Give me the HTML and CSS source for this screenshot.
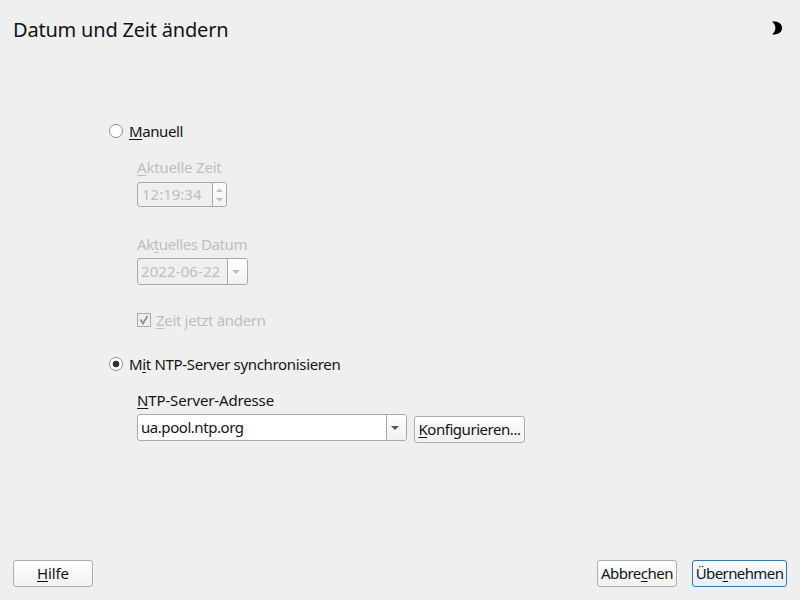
FILE: index.html
```
<!DOCTYPE html>
<html lang="de">
<head>
<meta charset="utf-8">
<title>Datum und Zeit ändern</title>
<link rel="stylesheet" href="styles.css">
</head>
<body>
<header class="titlebar">
  <h1>Datum und Zeit ändern</h1>
  <svg class="moon" width="12" height="14" viewBox="0 0 12 14"><path d="M1 .8C6-.2 11 2 11 7S6 14.200 1 13.200C5.500 10.500 5.500 3.500 1 .8Z"/></svg>
</header>
<main class="content">
  <label class="choice"><span class="radio"></span><span class="t-manual"><u>M</u>anuell</span></label>
  <section class="manual">
    <div class="label t-time"><u>A</u>ktuelle Zeit</div>
    <div class="field time">
      <span class="value">12:19:34</span>
      <span class="drop"><svg width="13" height="23" viewBox="0 0 13 23"><path d="M3 9 6.500 5.500 10 9ZM3 15H10L6.500 18.500Z"/></svg></span>
    </div>
    <div class="label date-label t-date">Ak<u>t</u>uelles Datum</div>
    <div class="field date">
      <span class="value">2022-06-22</span>
      <span class="drop"><svg width="19" height="25" viewBox="0 0 19 25"><path d="M4 11H12L8 15Z"/></svg></span>
    </div>
    <div class="check-row">
      <svg width="14" height="14" viewBox="0 0 14 14"><rect class="box" x=".5" y=".5" width="13" height="13"/><path class="tick" d="M3.500 6.500 6 10.500 10.500 3"/></svg>
      <span class="t-now"><u>Z</u>eit jetzt ändern</span>
    </div>
  </section>
  <label class="choice"><span class="radio on"></span><span class="t-sync">M<u>i</u>t NTP-Server synchronisieren</span></label>
  <section class="ntp">
    <div class="label t-address"><u>N</u>TP-Server-Adresse</div>
    <div class="ntp-row">
      <div class="field server">
        <span class="value">ua.pool.ntp.org</span>
        <span class="drop"><svg width="19" height="25" viewBox="0 0 19 25"><path d="M4 11H12L8 15Z"/></svg></span>
      </div>
      <button class="configure"><u>K</u>onfigurieren...</button>
    </div>
  </section>
</main>
<footer class="actions">
  <button class="help"><u>H</u>ilfe</button>
  <button class="cancel">Abbre<u>c</u>hen</button>
  <button class="apply">Übe<u>r</u>nehmen</button>
</footer>
</body>
</html>
```
FILE: styles.css
```
* { box-sizing: border-box; }
body {
  margin: 0;
  width: 800px;
  height: 600px;
  overflow: hidden;
  display: flex;
  flex-direction: column;
  background: #efefef;
  color: #141414;
  font: 15px/20px "Noto Sans", sans-serif;
  white-space: nowrap;
}
svg { display: block; flex: none; }
u { text-decoration: underline 1px; text-underline-offset: 2px; text-decoration-skip-ink: none; }
.titlebar { display: flex; justify-content: space-between; height: 60px; padding: 15px 17px 0 13px; }
h1 { margin: 0; font-size: 20px; line-height: 30px; font-weight: 400; letter-spacing: -.2px; }
.moon { margin-top: 6px; fill: #000; }
.content { flex: 1; padding: 61px 0 0 109px; }
.choice { display: flex; align-items: center; gap: 6px; height: 20px; }
.radio { width: 14px; height: 14px; border: 1px solid #929292; border-radius: 50%; background: #fff; }
.radio.on { background: radial-gradient(circle, #333 0 3px, #fff 3.700px); }
.manual, .ntp { padding-left: 28px; }
.manual { height: 213px; padding-top: 16px; color: #bebebe; }
.label { height: 20px; }
.date-label { margin-top: 27px; }
.t-manual { letter-spacing: -.4px; }
.t-time { letter-spacing: -.2px; }
.t-date { letter-spacing: -.4px; }
.t-now { letter-spacing: -.33px; }
.t-sync { letter-spacing: -.33px; }
.t-address { letter-spacing: -.15px; }
.field { display: flex; border: 1px solid #a9a9a9; border-radius: 3px; overflow: hidden; background: #efefef; }
.value { flex: 1; padding-left: 3px; line-height: 24px; }
.drop { border-left: 1px solid #a9a9a9; background: linear-gradient(#fff, #f1f1f1); fill: #bebebe; }
.time { width: 90px; height: 25px; margin-top: 5px; }
.time .value { padding-left: 4px; line-height: 23px; }
.date { width: 111px; height: 27px; margin-top: 4px; }
.date .value { letter-spacing: .1px; }
.check-row { display: flex; align-items: center; gap: 5px; height: 20px; margin-top: 25px; }
.box { fill: #efefef; stroke: #a9a9a9; }
.tick { fill: none; stroke: #909090; stroke-width: 1.800; }
.ntp { padding-top: 16px; }
.ntp-row { display: flex; align-items: flex-start; gap: 7px; padding-top: 4px; }
.server { width: 270px; height: 27px; background: #fff; }
.server .value { letter-spacing: -.45px; }
.server .drop { fill: #555; }
button {
  height: 27px;
  padding: 0 0 2px;
  border: 1px solid #adadad;
  border-radius: 3px;
  background: linear-gradient(#fefefe, #f1f1f1);
  color: inherit;
  font: inherit;
  text-align: center;
}
.configure { width: 111px; margin-top: 2px; letter-spacing: -.45px; }
.actions { display: flex; height: 40px; padding: 0 13px; }
.help { width: 80px; margin-right: auto; letter-spacing: -.1px; }
.cancel { width: 80px; margin-right: 15px; letter-spacing: -.5px; }
.apply { width: 95px; border-color: #3579a6; background: linear-gradient(#fbfdff, #e4eefa); letter-spacing: -.6px; }
```
